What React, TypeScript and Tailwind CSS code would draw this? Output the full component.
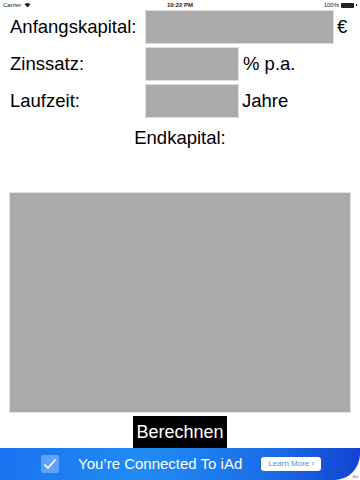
export default function App() {
  return (
    <div className="w-[360px] h-[480px] bg-white flex flex-col text-black font-['Liberation_Sans',Arial,sans-serif] overflow-hidden">
      {/* status bar */}
      <div className="h-[10px] flex items-start justify-between px-[3px] pt-[1px] text-[6px] leading-[8px] text-[#222]">
        <div className="flex items-center gap-[3px] w-[60px]">
          <span>Carrier</span>
          <svg width="7" height="6" viewBox="0 0 14 11">
            <path d="M7 10.5 L1 4 A9 9 0 0 1 13 4 Z" fill="#222" />
          </svg>
        </div>
        <span className="font-bold">10:22 PM</span>
        <div className="flex items-center justify-end gap-[2px] w-[60px]">
          <span>100%</span>
          <div className="w-[13px] h-[5px] bg-[#222] rounded-[1px]" />
          <div className="w-[1px] h-[2px] bg-[#222]" />
        </div>
      </div>

      {/* inputs */}
      <div className="flex flex-col gap-[3px] text-[18.5px]">
        <div className="flex items-center h-[34px]">
          <span className="w-[145px] pl-[10px]">Anfangskapital:</span>
          <div className="w-[189px] h-[34px] bg-[#aaaaaa] border border-[#dcdcdc]" />
          <span className="ml-[3px]">€</span>
        </div>
        <div className="flex items-center h-[34px]">
          <span className="w-[145px] pl-[10px]">Zinssatz:</span>
          <div className="w-[94px] h-[34px] bg-[#aaaaaa] border border-[#dcdcdc]" />
          <span className="ml-[4px]">% p.a.</span>
        </div>
        <div className="flex items-center h-[34px]">
          <span className="w-[145px] pl-[10px]">Laufzeit:</span>
          <div className="w-[94px] h-[34px] bg-[#aaaaaa] border border-[#dcdcdc]" />
          <span className="ml-[3px]">Jahre</span>
        </div>
      </div>

      <div className="mt-[9px] text-center text-[18.5px] leading-[22px]">Endkapital:</div>

      {/* result area */}
      <div className="mt-[43px] mx-[9px] h-[221px] bg-[#aaaaaa] border border-[#e0e0e0]" />

      {/* button */}
      <div className="flex justify-center mt-[3px]">
        <button className="w-[94px] h-[32px] bg-black text-white text-[18px] leading-[32px]">
          Berechnen
        </button>
      </div>

      {/* iAd banner */}
      <div className="relative h-[32px] bg-white">
        <div className="h-full rounded-br-[26px] bg-[linear-gradient(100deg,#1a72f0_0%,#1f8cf4_40%,#1b6ce8_75%,#1242cf_100%)] flex items-center">
          <div className="ml-[41px] w-[18px] h-[18px] rounded-[2px] bg-white/30 flex items-center justify-center">
            <svg width="14" height="12" viewBox="0 0 14 12">
              <path d="M1.5 6.5 L5 10 L12.5 1.5" stroke="white" strokeWidth="1.6" fill="none" />
            </svg>
          </div>
          <span className="ml-[19px] text-white text-[15px] leading-[18px]">You’re Connected To iAd</span>
          <div className="ml-[19px] w-[60px] h-[14px] bg-white rounded-[3px] flex items-center justify-center text-[8px] text-[#4a8fe0]">
            Learn More ›
          </div>
        </div>
        <span className="absolute right-[2px] bottom-[1px] text-[4px] leading-[5px] text-[#888]">iAd</span>
      </div>
    </div>
  );
}
